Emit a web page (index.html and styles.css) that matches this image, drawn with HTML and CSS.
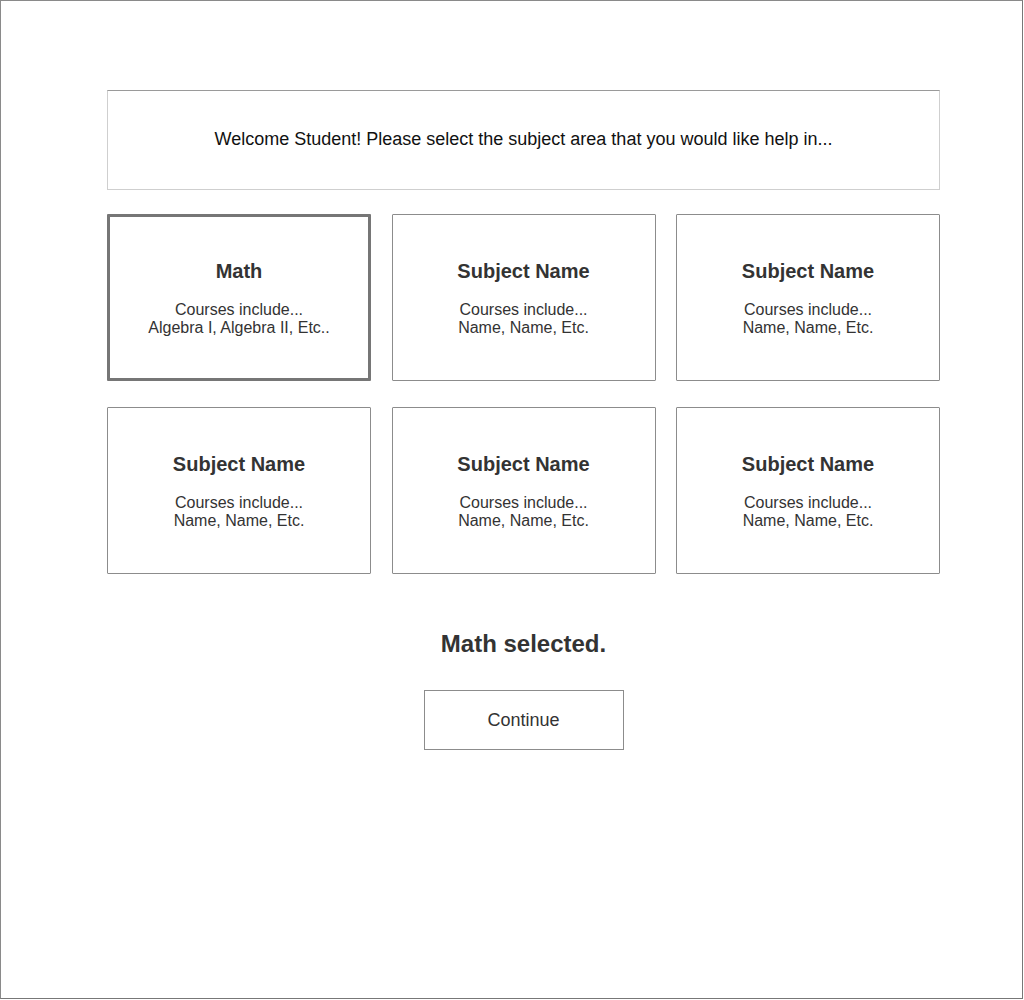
FILE: index.html
```html
<!DOCTYPE html>
<html>
<head>
<meta charset="utf-8">
<link rel="stylesheet" href="styles.css">
</head>
<body>
<div class="frame">
  <div class="content">
    <div class="welcome">Welcome Student! Please select the subject area that you would like help in...</div>
    <div class="grid">
      <div class="card selected">
        <div class="title">Math</div>
        <div class="desc">Courses include...<br>Algebra I, Algebra II, Etc..</div>
      </div>
      <div class="card">
        <div class="title">Subject Name</div>
        <div class="desc">Courses include...<br>Name, Name, Etc.</div>
      </div>
      <div class="card">
        <div class="title">Subject Name</div>
        <div class="desc">Courses include...<br>Name, Name, Etc.</div>
      </div>
      <div class="card">
        <div class="title">Subject Name</div>
        <div class="desc">Courses include...<br>Name, Name, Etc.</div>
      </div>
      <div class="card">
        <div class="title">Subject Name</div>
        <div class="desc">Courses include...<br>Name, Name, Etc.</div>
      </div>
      <div class="card">
        <div class="title">Subject Name</div>
        <div class="desc">Courses include...<br>Name, Name, Etc.</div>
      </div>
    </div>
    <div class="status">Math selected.</div>
    <div class="button">Continue</div>
  </div>
</div>
</body>
</html>
```

FILE: styles.css
```css
html, body {
  margin: 0;
  padding: 0;
  background: #ffffff;
}
body {
  font-family: "Liberation Sans", Arial, sans-serif;
  color: #333333;
}
.frame {
  box-sizing: border-box;
  width: 1023px;
  height: 999px;
  border: 1px solid #8a8a8a;
  border-right-color: #777;
  border-bottom-color: #777;
}
.content {
  display: flex;
  flex-direction: column;
  align-items: center;
  padding-top: 89px;
  padding-left: 24px;
}
.welcome {
  box-sizing: border-box;
  width: 833px;
  height: 100px;
  border: 1px solid #cfcfcf;
  border-top-color: #9a9a9a;
  display: flex;
  align-items: center;
  justify-content: center;
  font-size: 18px;
  color: #111111;
  padding-bottom: 1px;
}
.grid {
  margin-top: 24px;
  display: grid;
  grid-template-columns: 264px 264px 264px;
  column-gap: 20.5px;
  row-gap: 26px;
}
.card {
  box-sizing: border-box;
  height: 167px;
  border: 1px solid #8c8c8c;
  border-radius: 1px;
  display: flex;
  flex-direction: column;
  align-items: center;
  text-align: center;
  padding-top: 45px;
}
.card.selected {
  border: 3px solid #767676;
  padding-top: 43px;
}
.title {
  font-size: 20px;
  font-weight: bold;
  line-height: 22px;
  color: #333333;
}
.desc {
  margin-top: 19px;
  font-size: 16px;
  line-height: 18px;
  color: #333333;
}
.status {
  margin-top: 56px;
  font-size: 24px;
  font-weight: bold;
  line-height: 28px;
  color: #333333;
}
.button {
  box-sizing: border-box;
  margin-top: 32px;
  width: 200px;
  height: 60px;
  border: 1px solid #8c8c8c;
  display: flex;
  align-items: center;
  justify-content: center;
  font-size: 18px;
  color: #333333;
}
```
